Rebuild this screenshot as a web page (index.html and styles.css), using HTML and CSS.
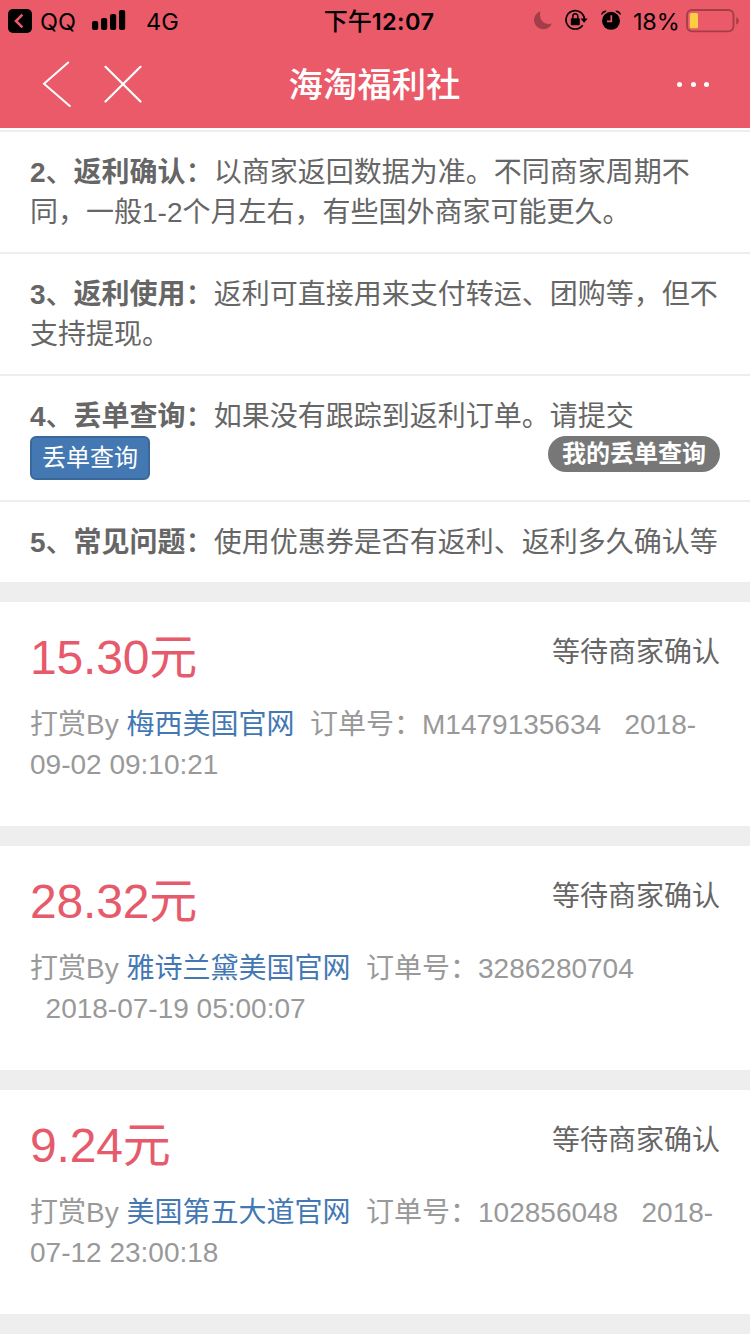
FILE: index.html
```html
<!DOCTYPE html>
<html lang="zh-CN">
<head>
<meta charset="utf-8">
<title>海淘福利社</title>
<link rel="stylesheet" href="styles.css">
</head>
<body>
<header class="header">
  <div class="status">
    <div class="status-left">
      <svg class="back-app" width="24" height="24" viewBox="0 0 24 24"><rect width="24" height="24" rx="5"/><path d="M14.400 5.600 8 12l6.400 6.400" fill="none" stroke="#eb5a69" stroke-width="2.600"/></svg>
      <span class="app">QQ</span>
      <svg class="signal" width="34" height="20" viewBox="0 0 34 20"><rect x="0" y="11" width="6.200" height="9" rx="2"/><rect x="9" y="8" width="6.200" height="12" rx="2"/><rect x="18" y="4" width="6.200" height="16" rx="2"/><rect x="27" y="0" width="6.200" height="20" rx="2"/></svg>
      <span class="network">4G</span>
    </div>
    <div class="clock"><span class="ampm">下午</span><span>12:07</span></div>
    <div class="status-right">
      <svg class="moon" width="18" height="19" viewBox="0 0 18 19"><path d="M6.500.3C4.300 7.800 9.700 14.700 17.800 12.500A9.200 9.200 0 1 1 6.500.3Z" fill="#a33e49"/></svg>
      <svg class="rotation" width="23" height="22" viewBox="0 0 23 22"><path d="M17.700 16.200A9.200 9.200 0 1 1 19.400 10" fill="none" stroke="#000" stroke-width="1.700"/><path d="M15.500 9.500h7.200l-3.600 4.200Z"/><rect x="5.800" y="9.200" width="9" height="7" rx=".8"/><path d="M7.800 9.600V7.200a2.500 2.500 0 0 1 5 0v2.400" fill="none" stroke="#000" stroke-width="1.500"/></svg>
      <svg class="alarm" width="20" height="20" viewBox="0 0 20 20"><circle cx="10" cy="10.800" r="9"/><path d="M0 4.800Q.6.400 5.600.4L4.800 2Q2.400 2.600 1.300 4.600ZM20 4.800Q19.400.4 14.400.4l.8 1.600q2.400.6 3.500 2.600Z"/><path d="M10.300 5.200v6.200H6" fill="none" stroke="#eb5a69" stroke-width="1.700"/></svg>
      <span class="percent">18%</span>
      <svg class="battery" width="54" height="24" viewBox="0 0 54 24"><rect x="1" y="1" width="46.500" height="21.300" rx="5" fill="none" stroke="#a33e49" stroke-width="1.800"/><rect x="3.800" y="4" width="8.200" height="15.300" rx="1.500" fill="#fccf42"/><path d="M50.200 8.200q2.700 1 2.700 3.800t-2.700 3.800Z" fill="#a33e49"/></svg>
    </div>
  </div>
  <nav class="nav">
    <div class="nav-left">
      <svg width="30" height="48" viewBox="0 0 30 48"><path d="M26.200 2.500 2 23.800 27.800 46" fill="none" stroke="#fff" stroke-width="2" stroke-linecap="round"/></svg>
      <svg width="38" height="38" viewBox="0 0 38 38"><path d="M1.500 1.800 36.500 36.500M36.500 1.800 1.500 36.500" fill="none" stroke="#fff" stroke-width="2.200" stroke-linecap="round"/></svg>
    </div>
    <h1 class="title">海淘福利社</h1>
    <div class="more"><i></i><i></i><i></i></div>
  </nav>
</header>
<main>
  <ul class="rules">
    <li><b>2<span>、</span>返利确认<span>：</span></b>以商家返回数据为准。不同商家周期不<br>同，一般1-2个月左右，有些国外商家可能更久。</li>
    <li><b>3<span>、</span>返利使用<span>：</span></b>返利可直接用来支付转运、团购等，但不<br>支持提现。</li>
    <li class="lookup"><b>4<span>、</span>丢单查询<span>：</span></b>如果没有跟踪到返利订单。请提交
      <div class="actions"><a class="button">丢单查询</a><a class="badge">我的丢单查询</a></div>
    </li>
    <li><b>5<span>、</span>常见问题<span>：</span></b>使用优惠券是否有返利、返利多久确认等</li>
  </ul>
  <section class="card">
    <div class="card-head"><strong class="price">15.30元</strong><span class="state">等待商家确认</span></div>
    <p class="info">打赏By <a>梅西美国官网</a>&nbsp; 订单号：M1479135634 &nbsp;&nbsp;2018-<br>09-02 09:10:21</p>
  </section>
  <section class="card">
    <div class="card-head"><strong class="price">28.32元</strong><span class="state">等待商家确认</span></div>
    <p class="info">打赏By <a>雅诗兰黛美国官网</a>&nbsp; 订单号：3286280704<br>&nbsp;&nbsp;2018-07-19 05:00:07</p>
  </section>
  <section class="card">
    <div class="card-head"><strong class="price">9.24元</strong><span class="state">等待商家确认</span></div>
    <p class="info">打赏By <a>美国第五大道官网</a>&nbsp; 订单号：102856048 &nbsp;&nbsp;2018-<br>07-12 23:00:18</p>
  </section>
</main>
</body>
</html>
```
FILE: styles.css
```css
* { box-sizing: border-box; }
body {
  margin: 0;
  width: 750px;
  height: 1334px;
  overflow: hidden;
  background: #fff;
  color: #666;
  font: 28px/40px "Liberation Sans", "Noto Sans CJK SC", sans-serif;
  white-space: nowrap;
}
svg { display: block; flex: none; }
.header { height: 128px; background: #eb5a69; color: #000; }
.status {
  height: 40px;
  display: grid;
  grid-template-columns: 1fr auto 1fr;
  grid-template-rows: 40px;
  align-items: center;
  font-family: Inter, "Noto Sans CJK SC", sans-serif;
  font-size: 23px;
}
.status-left, .status-right { display: flex; align-items: center; height: 40px; }
.status-left { padding-left: 8px; }
.back-app { margin-top: 2px; }
.app { width: 51px; padding: 3px 0 0 8px; font-size: 23.500px; }
.signal { margin-left: 9px; }
.network { margin-left: 20px; padding-top: 3px; font-size: 23.500px; }
.clock { font-weight: 600; font-size: 23.500px; letter-spacing: .4px; padding: 3px 0 0 8px; display: flex; align-items: center; }
.ampm { font-weight: 500; font-size: 24px; letter-spacing: 0; }
.status-right { justify-content: flex-end; padding-right: 10px; }
.rotation { margin-left: 13px; }
.alarm { margin-left: 13px; }
.percent { width: 46px; margin-left: 12px; padding-top: 3px; font-size: 23.500px; letter-spacing: -.2px; }
.battery { margin: 1px 0 0 7px; }
.nav {
  height: 88px;
  display: grid;
  grid-template-columns: 1fr auto 1fr;
  align-items: center;
  color: #fff;
}
.nav-left { display: flex; align-items: center; gap: 32px; padding-left: 42px; }
.title { margin: 0; padding: 1px 1px 0 0; font-size: 34.400px; font-weight: 500; line-height: 48px; }
.more { display: flex; justify-content: flex-end; gap: 8.400px; padding-right: 41px; }
.more i { width: 5px; height: 5px; border-radius: 50%; background: #fff; }
.rules { margin: 2px 0 0; padding: 0; list-style: none; }
.rules li { padding: 21px 30px 19px; border-top: 2px solid #eee; }
.rules .lookup { padding-bottom: 20px; }
.rules b span { font-weight: 500; }
.actions { display: flex; justify-content: space-between; align-items: flex-start; margin-top: -1px; }
.button {
  width: 120px;
  height: 44px;
  border: 2px solid #3b689b;
  border-radius: 6px;
  background: #4478b3;
  color: #fff;
  font-size: 24px;
  line-height: 40px;
  text-align: center;
}
.badge {
  width: 172px;
  height: 36px;
  border-radius: 18px;
  background: #777;
  color: #fff;
  font-size: 24px;
  font-weight: 700;
  line-height: 36px;
  text-align: center;
}
.card { height: 244px; padding: 30px 30px 0; border-top: 20px solid #eee; }
.card:last-child { height: 264px; border-bottom: 20px solid #eee; }
.card-head { display: flex; justify-content: space-between; align-items: flex-start; height: 73px; }
.price { color: #e65a6c; font-size: 48px; font-weight: 400; line-height: 52px; letter-spacing: -.15px; }
.state { padding-top: 1px; }
.info { margin: 0; color: #999; }
.info a { color: #4478b3; }
```
